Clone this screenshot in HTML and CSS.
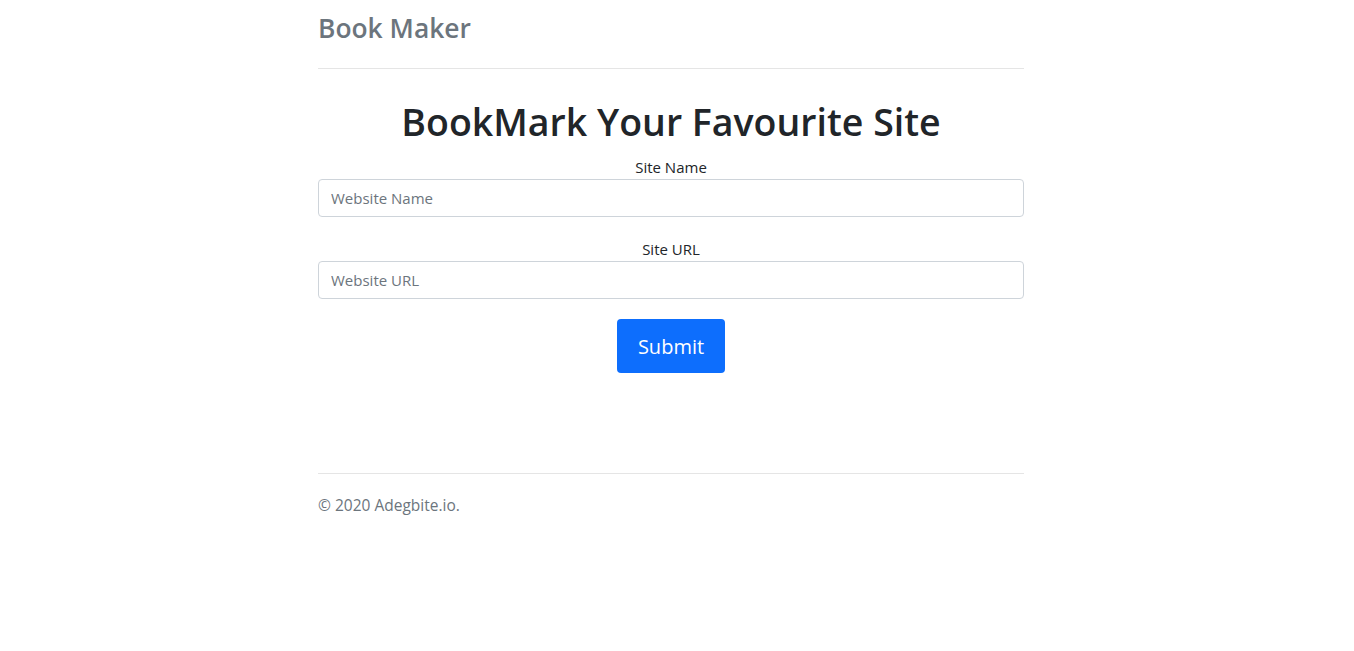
FILE: index.html
```html
<!DOCTYPE html>
<html lang="en">
<head>
<meta charset="utf-8">
<title>Book Maker</title>
<link rel="stylesheet" href="styles.css">
</head>
<body>
<div class="page">
  <header class="header">
    <span class="brand">Book Maker</span>
  </header>
  <main class="main">
    <h1 class="title">BookMark Your Favourite Site</h1>
    <form class="form">
      <div class="field">
        <label class="label" for="siteName">Site Name</label>
        <input class="input" id="siteName" type="text" placeholder="Website Name">
      </div>
      <div class="field">
        <label class="label" for="siteUrl">Site URL</label>
        <input class="input" id="siteUrl" type="text" placeholder="Website URL">
      </div>
      <div class="actions">
        <button class="btn" type="button">Submit</button>
      </div>
    </form>
  </main>
  <footer class="footer">© 2020 Adegbite.io.</footer>
</div>
</body>
</html>
```

FILE: styles.css
```css
* { box-sizing: border-box; }
html, body { margin: 0; background: #fff; }
body {
  padding-right: 12px;
  font-family: "Open Sans", "Noto Sans", sans-serif;
  color: #212529;
  font-size: 16px;
  line-height: 1.5;
}
.page { width: 706px; margin: 0 auto; }
.header {
  height: 69px;
  padding-top: 13px;
  border-bottom: 1px solid #e5e5e5;
}
.brand {
  font-size: 26.4px;
  font-weight: 600;
  color: #6c757d;
  line-height: 1.2;
}
.main { padding-top: 29px; }
.title {
  margin: 0;
  text-align: center;
  font-size: 37.5px;
  font-weight: 600;
  line-height: 48px;
  color: #212529;
}
.form { margin-top: 9px; }
.field { display: flex; flex-direction: column; margin-bottom: 20px; }
.label {
  text-align: center;
  font-size: 15px;
  line-height: 24px;
}
.input {
  width: 100%;
  height: 38px;
  padding: 6px 12px;
  border: 1px solid #ced4da;
  border-radius: 4px;
  font-family: inherit;
  font-size: 15px;
  color: #212529;
}
.input::placeholder { color: #6c757d; }
.actions { display: flex; justify-content: center; }
.btn {
  width: 108px;
  height: 54px;
  border: 0;
  border-radius: 4px;
  background: #0d6efd;
  color: #fff;
  font-family: inherit;
  font-size: 20px;
}
.footer {
  margin-top: 100px;
  border-top: 1px solid #e5e5e5;
  padding-top: 20px;
  font-size: 15.5px;
  color: #6c757d;
}
```
